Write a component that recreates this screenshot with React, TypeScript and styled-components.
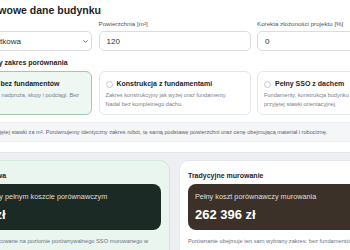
import styled, { createGlobalStyle } from "styled-components"

const GlobalStyle = createGlobalStyle`
  html, body {
    margin: 0;
    background: #edeff2;
    font-family: "Liberation Sans", Arial, sans-serif;
    color: #1f2328;
    overflow: hidden;
  }
`

const Page = styled.div`
  display: flex;
  flex-direction: column;
  gap: 7px;
  width: 491px;
  margin: -9px 0 0 -71px;
`

const Card = styled.section`
  background: #fff;
  border: 1px solid #e4e7eb;
  border-radius: 10px;
  padding: 10px;
`

const Heading = styled.h2`
  margin: 0 0 2px;
  font-size: 10.5px;
  line-height: 16px;
  font-weight: 700;
`

const Grid = styled.div`
  display: grid;
  grid-template-columns: repeat(3, 1fr);
  gap: 6.5px;
`

const Field = styled.label`
  display: flex;
  flex-direction: column;
  gap: 3px;
`

const Label = styled.span`
  font-size: 6.2px;
  line-height: 8px;
  color: #4b5563;
`

const InputBox = styled.div`
  display: flex;
  align-items: center;
  justify-content: space-between;
  height: 20px;
  box-sizing: border-box;
  padding: 0 2px 0 7px;
  border: 1px solid #d9dde3;
  border-radius: 5px;
  font-size: 8px;
  color: #2b3038;
`

const SubHeading = styled.h3`
  margin: 7px 0 3px;
  font-size: 7px;
  line-height: 10px;
  font-weight: 700;
`

const Option = styled.div<{ $active?: boolean }>`
  padding: 7px 10px 6px 6px;
  border-radius: 6px;
  border: 1px solid ${(p) => (p.$active ? "#9ec9ad" : "#e4e7eb")};
  background: ${(p) => (p.$active ? "#eef7f1" : "#fff")};
`

const OptionTitle = styled.div`
  display: flex;
  align-items: center;
  gap: 4px;
  font-size: 7px;
  line-height: 10px;
  font-weight: 700;
  white-space: nowrap;
`

const Radio = styled.span<{ $active?: boolean }>`
  flex: none;
  width: 7px;
  height: 7px;
  box-sizing: border-box;
  border-radius: 50%;
  border: 1px solid ${(p) => (p.$active ? "#2f7a4d" : "#c4c8ce")};
  background: ${(p) => (p.$active ? "radial-gradient(#2f7a4d 45%, #fff 50%)" : "#fff")};
`

const OptionDesc = styled.p`
  margin: 2px 0 0;
  font-size: 5.6px;
  line-height: 8.5px;
  color: #7a808a;
`

const Note = styled.div`
  margin-top: 7px;
  padding: 5px 7px;
  background: #f5f6f8;
  border: 1px solid #eceef1;
  border-radius: 5px;
  font-size: 5.6px;
  line-height: 8px;
  color: #5b616b;
  white-space: nowrap;
`

const Results = styled.div`
  display: grid;
  grid-template-columns: 1fr 1fr;
  gap: 9px;
`

const ResultCard = styled.section<{ $tone: "green" | "plain" }>`
  padding: 9px 8px;
  border-radius: 10px;
  border: 1px solid ${(p) => (p.$tone === "green" ? "#d6e9dd" : "#e4e7eb")};
  background: ${(p) => (p.$tone === "green" ? "#e9f5ee" : "#fff")};
`

const ResultTitle = styled.h4`
  margin: 0;
  font-size: 7px;
  line-height: 12px;
  font-weight: 700;
`

const TotalBox = styled.div<{ $bg: string }>`
  margin-top: 2px;
  padding: 8px 7px;
  border-radius: 8px;
  background: ${(p) => p.$bg};
  color: #fff;
`

const TotalLabel = styled.div`
  font-size: 7.3px;
  line-height: 10px;
  color: rgba(255, 255, 255, 0.85);
  white-space: nowrap;
`

const TotalValue = styled.div`
  margin-top: 5px;
  font-size: 13px;
  line-height: 15px;
  font-weight: 700;
  white-space: nowrap;
`

const ResultNote = styled.p`
  margin: 7px 0 0;
  font-size: 5.7px;
  line-height: 8px;
  color: #6b7280;
`

const Chevron = () => (
  <svg width="7" height="7" viewBox="0 0 24 24" fill="none" stroke="#555" strokeWidth="3" strokeLinecap="round" strokeLinejoin="round">
    <path d="m6 9 6 6 6-6" />
  </svg>
)

const options = [
  {
    title: "Konstrukcja bez fundamentów",
    desc: "Ściany nośne, stropy, nadproża, słupy i podciągi. Bez kompletnego dachu.",
    active: true,
  },
  {
    title: "Konstrukcja z fundamentami",
    desc: "Zakres konstrukcyjny jak wyżej oraz fundamenty. Nadal bez kompletnego dachu.",
  },
  {
    title: "Pełny SSO z dachem",
    desc: "Fundamenty, konstrukcja budynku i dach według przyjętej stawki orientacyjnej.",
  },
]

export default function App() {
  return (
    <>
      <GlobalStyle />
      <Page>
        <Card>
          <Heading>01 – Podstawowe dane budynku</Heading>
          <Grid>
            <Field>
              <Label>Typ budynku</Label>
              <InputBox>
                Zabudowa użytkowa
                <Chevron />
              </InputBox>
            </Field>
            <Field>
              <Label>Powierzchnia [m²]</Label>
              <InputBox>120</InputBox>
            </Field>
            <Field>
              <Label>Korekta złożoności projektu [%]</Label>
              <InputBox>0</InputBox>
            </Field>
          </Grid>
          <SubHeading>02 – Porównywany zakres porównania</SubHeading>
          <Grid>
            {options.map((o) => (
              <Option key={o.title} $active={o.active}>
                <OptionTitle>
                  <Radio $active={o.active} />
                  {o.title}
                </OptionTitle>
                <OptionDesc>{o.desc}</OptionDesc>
              </Option>
            ))}
          </Grid>
          <Note>
            Wartość według przyjętej stawki za m². Porównujemy identyczny zakres robót, tę samą podstawę powierzchni oraz cenę obejmującą materiał i robociznę.
          </Note>
        </Card>
        <Results>
          <ResultCard $tone="green">
            <ResultTitle>Konstrukcja stalowa</ResultTitle>
            <TotalBox $bg="#1b2a24">
              <TotalLabel>Łączny koszt przy pełnym koszcie porównawczym</TotalLabel>
              <TotalValue>198 540 zł</TotalValue>
            </TotalBox>
            <ResultNote>Wszystkie ceny są oszacowane na poziomie porównywalnego SSO murowanego w analogicznym zakresie.</ResultNote>
          </ResultCard>
          <ResultCard $tone="plain">
            <ResultTitle>Tradycyjne murowanie</ResultTitle>
            <TotalBox $bg="#3b3128">
              <TotalLabel>Pełny koszt porównawczy murowania</TotalLabel>
              <TotalValue>262 396 zł</TotalValue>
            </TotalBox>
            <ResultNote>Porównanie obejmuje ten sam wybrany zakres: bez fundamentów i dachu.</ResultNote>
          </ResultCard>
        </Results>
      </Page>
    </>
  )
}
